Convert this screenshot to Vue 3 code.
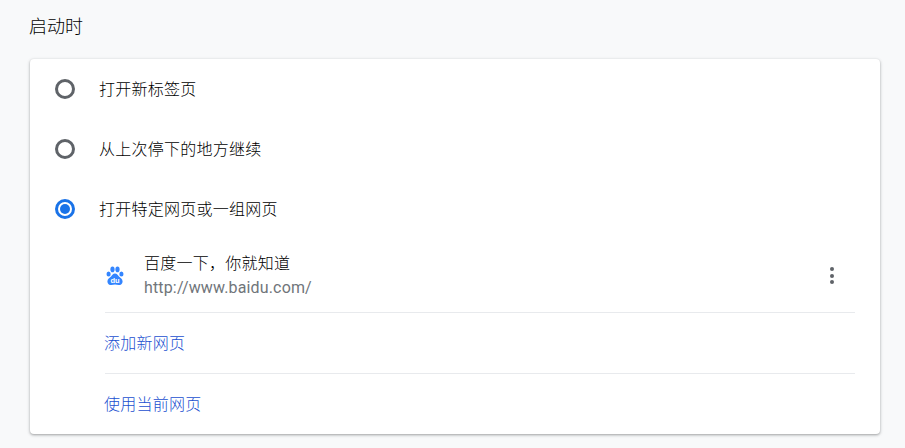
<script setup>
const options = [
  { label: '打开新标签页', checked: false },
  { label: '从上次停下的地方继续', checked: false },
  { label: '打开特定网页或一组网页', checked: true },
]
</script>

<template>
  <div class="page">
    <h2 class="title">启动时</h2>
    <section class="card">
      <div v-for="o in options" :key="o.label" class="option">
        <span class="radio" :class="{ on: o.checked }"></span>
        <span class="label">{{ o.label }}</span>
      </div>
      <div class="sub">
        <div class="site">
          <svg class="favicon" viewBox="0 0 18 20" width="18" height="20">
            <g fill="#3385ff">
              <ellipse cx="2.6" cy="8" rx="2.1" ry="2.6" />
              <ellipse cx="6.5" cy="3.4" rx="2.1" ry="2.8" />
              <ellipse cx="11.5" cy="3.4" rx="2.1" ry="2.8" />
              <ellipse cx="15.4" cy="8" rx="2.1" ry="2.6" />
              <path d="M9 7.400c2 0 2.800 1.600 4 3 1.300 1.200 3.600 2.400 3.600 5 0 2.400-1.900 3.600-3.900 3.600-1.400 0-2.500-.4-3.700-.4s-2.300.4-3.700.4c-2 0-3.900-1.200-3.900-3.600 0-2.600 2.300-3.800 3.600-5 1.200-1.400 2-3 4-3z" />
            </g>
            <text x="9" y="17" class="du" text-anchor="middle">du</text>
          </svg>
          <div class="site-text">
            <div class="site-name">百度一下，你就知道</div>
            <div class="site-url">http://www.baidu.com/</div>
          </div>
          <span class="more"><i></i><i></i><i></i></span>
        </div>
        <div class="link-row"><a class="link">添加新网页</a></div>
        <div class="link-row"><a class="link">使用当前网页</a></div>
      </div>
    </section>
  </div>
</template>

<style>
html, body { margin: 0; background: #f8f9fa; }
</style>

<style scoped>
.page {
  height: 448px;
  box-sizing: border-box;
  padding: 0 25px 0 30px;
  background: #f8f9fa;
  font-family: Roboto, "Noto Sans CJK SC", sans-serif;
  color: #000;
  overflow: hidden;
}
.title {
  margin: 0 0 0 -1px;
  height: 59px;
  padding-top: 14px;
  box-sizing: border-box;
  font-size: 18px;
  line-height: 26px;
  font-weight: 300;
}
.card {
  height: 375px;
  background: #fff;
  border-radius: 4px;
  box-shadow: 0 1px 2px rgba(60, 64, 67, .3), 0 1px 3px 1px rgba(60, 64, 67, .15);
}
.option {
  height: 60px;
  display: flex;
  align-items: center;
  padding-left: 25px;
  font-size: 16px;
}
.label {
  padding-bottom: 2px;
  font-weight: 300;
  letter-spacing: .25px;
}
.radio {
  width: 20px;
  height: 20px;
  box-sizing: border-box;
  border: 3px solid #5f6368;
  border-radius: 50%;
  margin-right: 24px;
  position: relative;
}
.radio.on { border-color: #1a73e8; }
.radio.on::after {
  content: "";
  position: absolute;
  inset: 2px;
  border-radius: 50%;
  background: #1a73e8;
}
.sub { padding: 0 25px 0 75px; }
.site {
  height: 73px;
  display: flex;
  align-items: center;
  border-bottom: 1px solid #e8eaed;
}
.favicon { margin-right: 20px; margin-left: 1px; flex: none; }
.du { font: 700 7.5px "Liberation Sans", sans-serif; fill: #fff; }
.site-text { flex: 1; }
.site-name {
  font-size: 16px;
  line-height: 24px;
  font-weight: 300;
  letter-spacing: .25px;
  padding-top: 1px;
}
.site-url {
  font-size: 16px;
  line-height: 24px;
  color: #70757a;
  letter-spacing: .15px;
}
.more {
  width: 4px;
  display: flex;
  flex-direction: column;
  gap: 2.33px;
  margin-right: 21px;
}
.more i { width: 4px; height: 4px; border-radius: 50%; background: #5f6368; }
.link-row {
  height: 60px;
  display: flex;
  align-items: center;
  font-size: 16px;
}
.link-row + .link-row { border-top: 1px solid #e8eaed; }
.link {
  color: #1a4fd0;
  margin-left: -1px;
  padding-bottom: 2px;
  font-weight: 300;
  letter-spacing: .25px;
}
</style>
